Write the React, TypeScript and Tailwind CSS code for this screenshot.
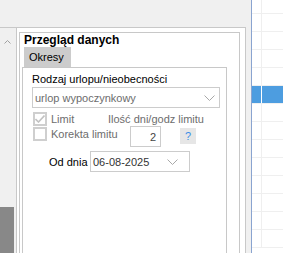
import React from "react";

const Chevron = ({ className = "" }: { className?: string }) => (
  <svg width="11" height="6" viewBox="0 0 11 6" className={"shrink-0 " + className}>
    <polyline points="0.5,0.5 5.5,5.5 10.5,0.5" fill="none" stroke="#a8a8a8" strokeWidth="1" />
  </svg>
);

const Checkbox = ({ checked = false }: { checked?: boolean }) => (
  <div className="w-[14px] h-[14px] shrink-0 border-2 border-[#cfcfcf] bg-white flex items-center justify-center">
    {checked && (
      <svg width="10" height="8" viewBox="0 0 10 8">
        <polyline points="0.5,4 3.5,7 9.5,0.5" fill="none" stroke="#c2c2c2" strokeWidth="1.6" />
      </svg>
    )}
  </div>
);

const gridRows = Array.from({ length: 14 }, (_, i) => i);

export default function App() {
  return (
    <div className="flex w-[283px] h-[253px] overflow-hidden bg-white font-['Liberation_Sans',Arial,sans-serif] text-[11px] leading-[14px] text-black">
      {/* Form area */}
      <div className="flex flex-col w-[251px] shrink-0 bg-[#f0f0f0]">
        <div className="h-[27px] shrink-0" />
        <div className="flex flex-1 mr-[5px] border-t border-[#c8c8c8]">
          {/* Scrollbar */}
          <div className="flex flex-col w-[16px] shrink-0">
            <div className="pt-[12px] pl-[4px]">
              <svg width="7" height="4" viewBox="0 0 7 4">
                <polyline points="0.5,3.5 3.5,0.5 6.5,3.5" fill="none" stroke="#a0a0a0" strokeWidth="1" />
              </svg>
            </div>
            <div className="flex-1" />
            <div className="w-[14px] h-[46px] bg-[#888888]" />
          </div>

          {/* Panel */}
          <div className="flex flex-1 flex-col bg-white border-x border-[#c8c8c8] pt-[4px] pl-[2px] pr-[5px]">
            <div className="flex flex-1 flex-col border-x border-t border-[#c8c8c8] pl-[2px]">
              <div className="h-[14px] pl-[2px] text-[12px] font-bold leading-[14px]">Przegląd danych</div>

              {/* Tab strip */}
              <div className="flex">
                <div className="ml-[2px] w-[47px] h-[20px] bg-[#cccccc] flex items-center pl-[5px]">Okresy</div>
              </div>

              {/* Tab page */}
              <div className="flex flex-1 flex-col mr-[12px] border-x border-t border-[#c8c8c8]">
                <div className="mt-[4px] h-[14px] pl-[9px]">Rodzaj urlopu/nieobecności</div>

                <div className="mt-[1px] ml-[9px] w-[188px] h-[21px] border border-[#cccccc] flex items-center justify-between pl-[2px] pr-[4px]">
                  <span className="text-[#6d6d6d]">urlop wypoczynkowy</span>
                  <Chevron />
                </div>

                <div className="mt-[4px] h-[14px] flex items-center pl-[10px]">
                  <div className="w-[75px] flex items-center">
                    <Checkbox checked />
                    <span className="ml-[4px] text-[#6d6d6d]">Limit</span>
                  </div>
                  <span className="text-[#6d6d6d]">Ilość dni/godz limitu</span>
                </div>

                <div className="h-[21px] flex items-start pl-[10px]">
                  <div className="w-[97px] mt-[1px] h-[14px] flex items-center">
                    <Checkbox />
                    <span className="ml-[4px] text-[#6d6d6d]">Korekta limitu</span>
                  </div>
                  <div className="w-[31px] h-[21px] border border-[#cccccc] flex items-center justify-end pr-[4px] text-[#444444]">2</div>
                  <div className="ml-[19px] mt-[2px] w-[16px] h-[16px] bg-[#e6e6e6] flex items-center justify-center text-[#3b8ee6]">?</div>
                </div>

                <div className="mt-[4px] h-[21px] flex items-center pl-[26px]">
                  <span className="w-[41px]">Od dnia</span>
                  <div className="w-[100px] h-[21px] border border-[#cccccc] flex items-center justify-between pl-[2px] pr-[11px]">
                    <span className="text-[#333333]">06-08-2025</span>
                    <Chevron />
                  </div>
                </div>
              </div>
            </div>
          </div>
        </div>
      </div>

      {/* Grid on the right */}
      <div className="flex flex-col flex-1 border-l border-[#8aa4d0]">
        {gridRows.map((i) => {
          const selected = i === 5;
          return (
            <div
              key={i}
              className={
                "flex shrink-0 border-b " +
                (i === 0 ? "h-[14px] " : "h-[18px] ") +
                (selected ? "bg-[#4d9de0] border-[#f0f0f0]" : "border-[#efefef]")
              }
            >
              <div className={"w-[10px] border-r " + (selected ? "border-white" : "border-[#efefef]")} />
              <div className="flex-1" />
            </div>
          );
        })}
      </div>
    </div>
  );
}
